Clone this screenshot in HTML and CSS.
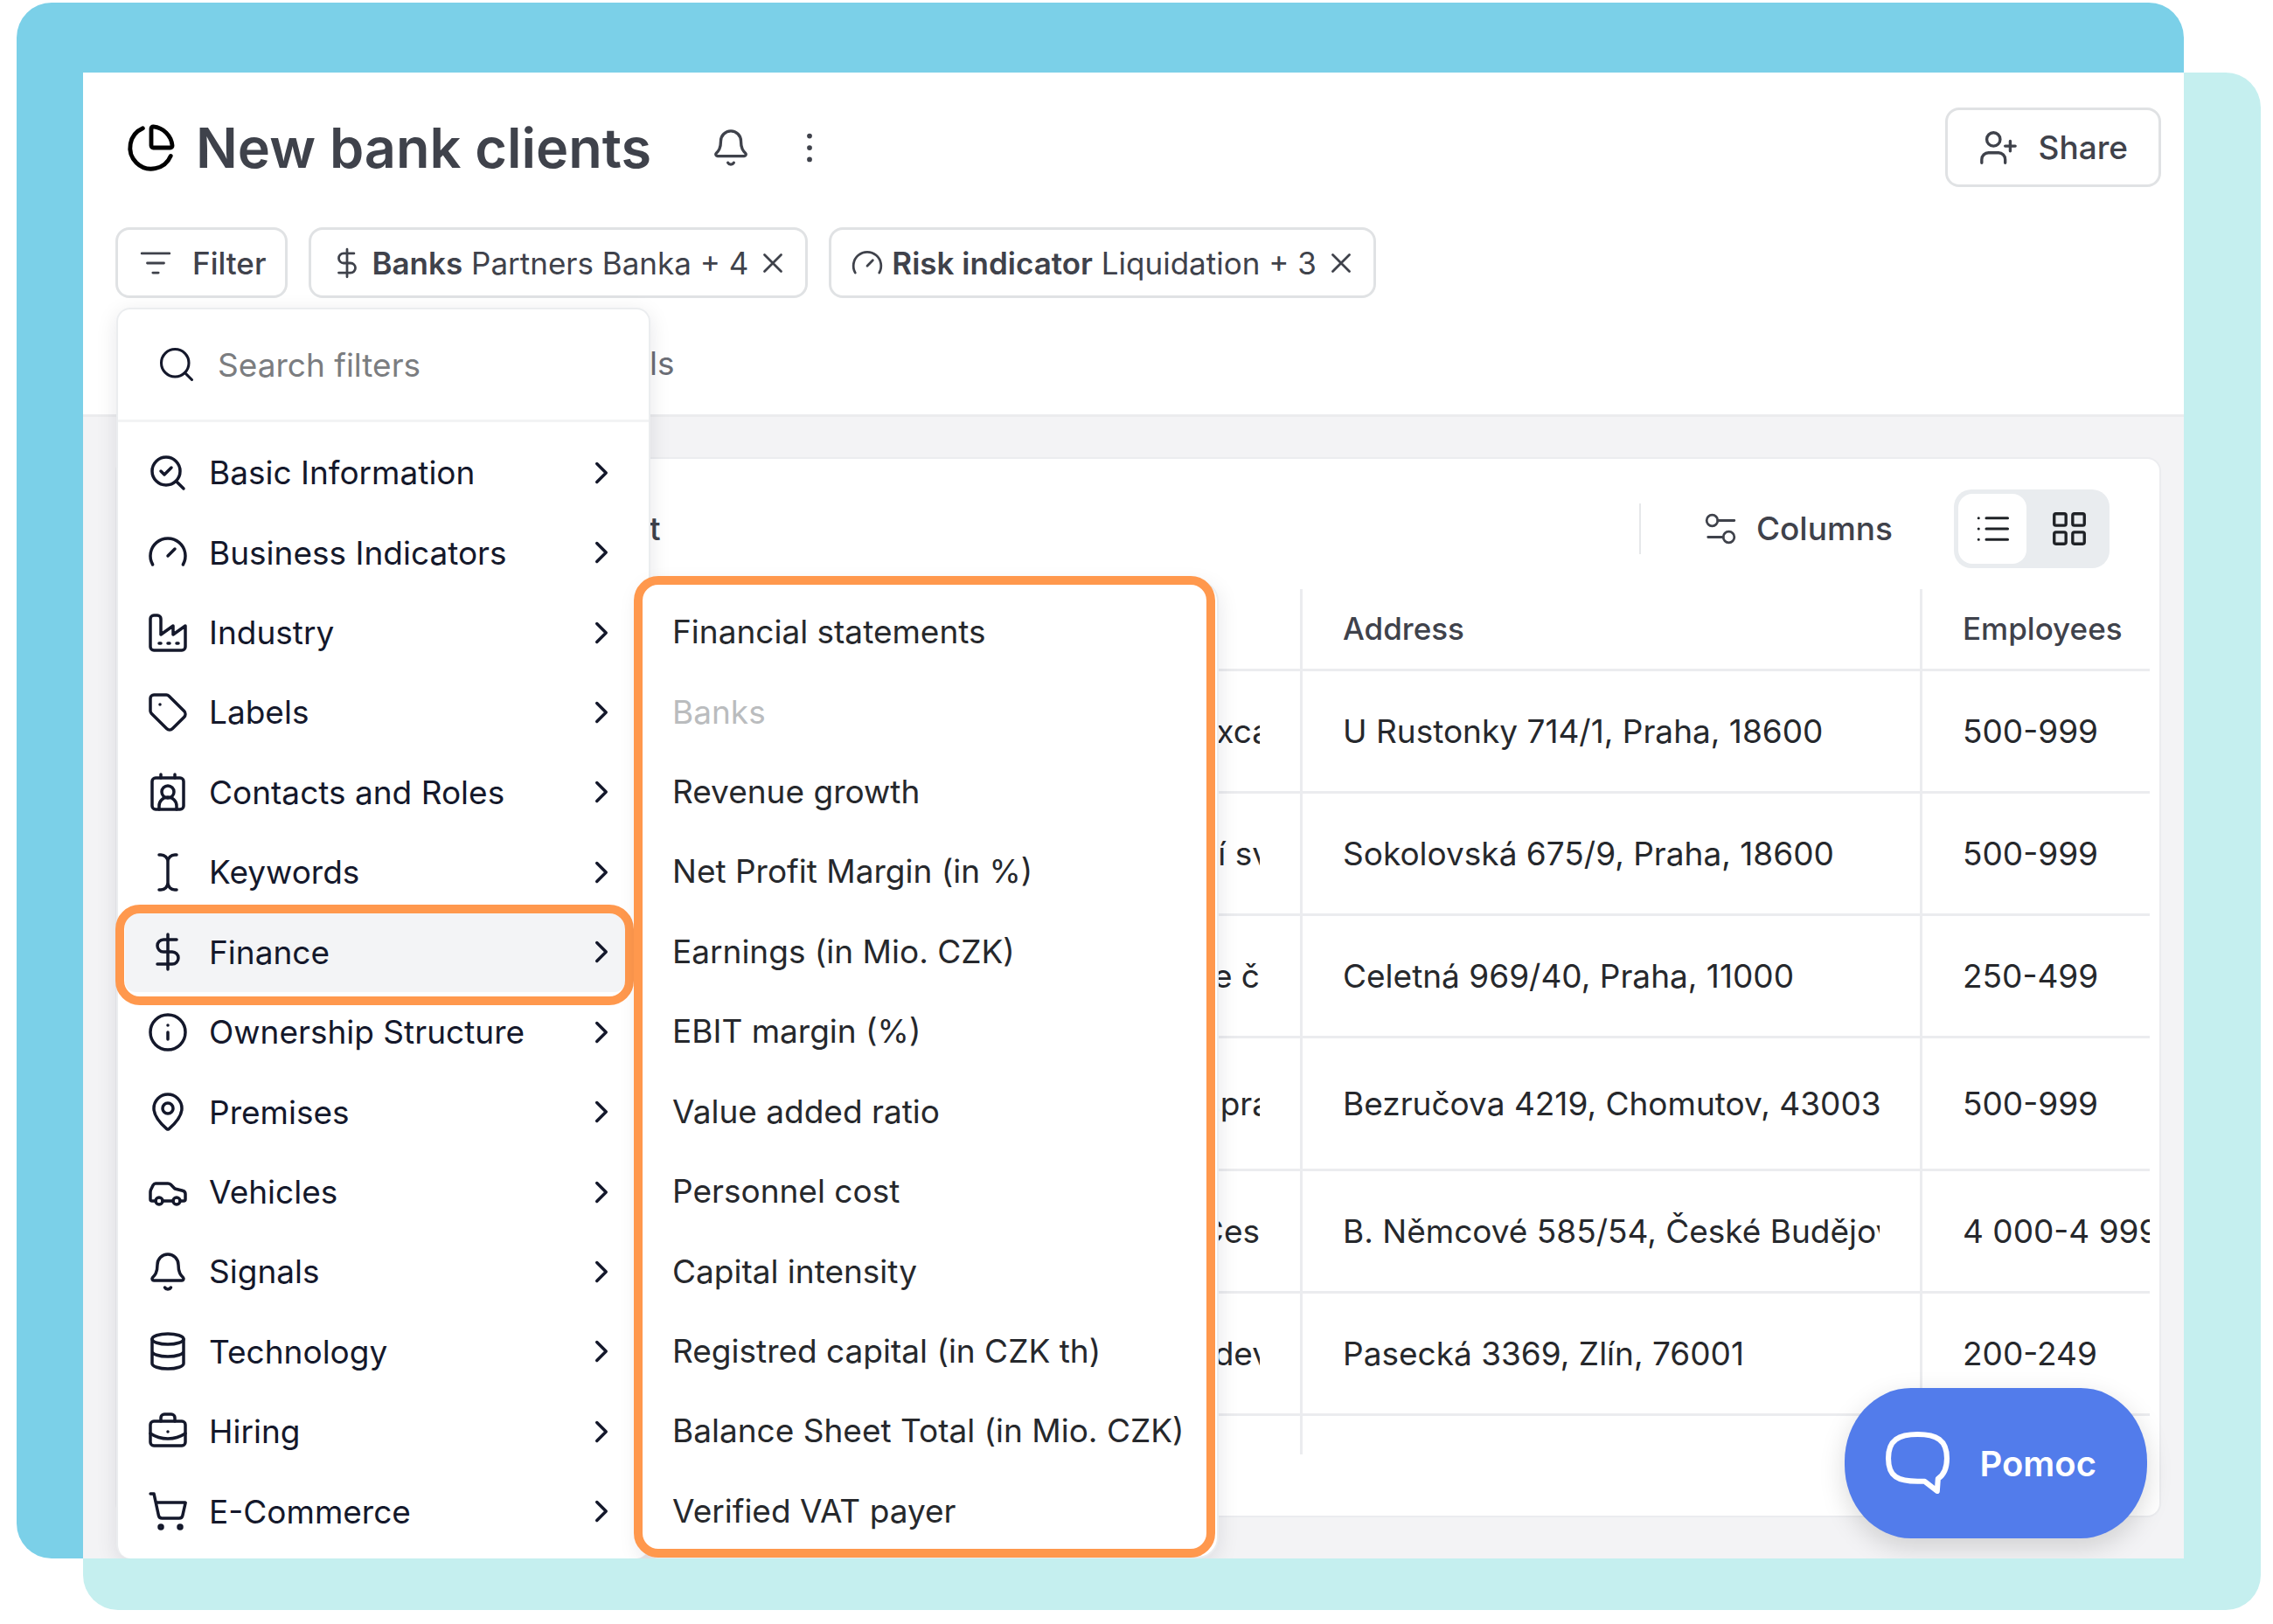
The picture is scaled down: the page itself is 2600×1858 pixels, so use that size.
FILE: index.html
```html
<!DOCTYPE html>
<html lang="en">
<head>
    <meta charset="UTF-8">
    <meta name="viewport" content="width=device-width, initial-scale=1.0">
    <title>New bank clients</title>
    <link rel="stylesheet" href="styles.css">
</head>
<body>

<svg class="sprite" aria-hidden="true">
    <symbol id="chevron" viewBox="0 0 24 24"><path d="m9 18 6-6-6-6"/></symbol>
    <symbol id="close" viewBox="0 0 24 24"><path d="M18 6 6 18M6 6l12 12"/></symbol>
    <symbol id="dollar" viewBox="0 0 24 24"><path d="M12 2v20M17 5H9.500a3.500 3.500 0 0 0 0 7h5a3.500 3.500 0 0 1 0 7H6"/></symbol>
    <symbol id="gauge" viewBox="0 0 24 24"><path d="m12 14 4-4M3.340 19a10 10 0 1 1 17.320 0"/></symbol>
    <symbol id="bell" viewBox="0 0 24 24"><path d="M10.268 21a2 2 0 0 0 3.464 0M3.262 15.326A1 1 0 0 0 4 17h16a1 1 0 0 0 .740-1.673C19.410 13.956 18 12.499 18 8A6 6 0 0 0 6 8c0 4.499-1.411 5.956-2.738 7.326"/></symbol>
</svg>

<div class="stage">
    <div class="window">
        <header class="header">
            <div class="title-row">
                <svg class="icon icon-title" viewBox="0 0 24 24"><path d="M21 12c.552 0 1.005-.449.950-.998a10 10 0 0 0-8.953-8.951c-.550-.055-.998.398-.998.950v8a1 1 0 0 0 1 1zM21.210 15.890A10 10 0 1 1 8 2.830"/></svg>
                <h1>New bank clients</h1>
                <button class="icon-btn" aria-label="Notifications"><svg class="icon icon-lg"><use href="#bell"/></svg></button>
                <button class="icon-btn" aria-label="More"><svg class="icon icon-lg" viewBox="0 0 24 24"><g class="dots"><circle cx="12" cy="5" r="1.500"/><circle cx="12" cy="12" r="1.500"/><circle cx="12" cy="19" r="1.500"/></g></svg></button>
                <button class="btn share">
                    <svg class="icon icon-lg" viewBox="0 0 24 24"><path d="M2 21v-2a4 4 0 0 1 4-4h6a4 4 0 0 1 4 4v2M19 8v6M22 11h-6"/><circle cx="9" cy="7" r="4"/></svg>
                    Share
                </button>
            </div>

            <div class="filter-row">
                <button class="btn filter">
                    <svg class="icon icon-sm" viewBox="0 0 24 24"><path d="M2 5h20M6 12h12M10 19h4"/></svg>
                    Filter
                </button>
                <button class="btn chip">
                    <svg class="icon icon-sm"><use href="#dollar"/></svg>
                    <span><b>Banks</b> Partners Banka + 4</span>
                    <svg class="icon icon-sm"><use href="#close"/></svg>
                </button>
                <button class="btn chip">
                    <svg class="icon icon-sm"><use href="#gauge"/></svg>
                    <span><b>Risk indicator</b> Liquidation + 3</span>
                    <svg class="icon icon-sm"><use href="#close"/></svg>
                </button>
            </div>

            <nav class="tabs"><a href="#">ls</a></nav>
        </header>

        <main class="content">
            <section class="card">
                <div class="toolbar">
                    <span class="toolbar-label">t</span>
                    <div class="toolbar-right">
                        <button class="columns">
                            <svg class="icon icon-sm" viewBox="0 0 24 24"><circle cx="6" cy="6" r="4"/><path d="M10 6h12M3 18h11"/><circle cx="18" cy="18" r="4"/></svg>
                            Columns
                        </button>
                        <div class="toggle">
                            <button class="active" aria-label="List"><svg class="icon icon-md" viewBox="0 0 24 24"><path d="M8 5h14M8 12h14M8 19h14M3 5h.01M3 12h.01M3 19h.01"/></svg></button>
                            <button aria-label="Grid"><svg class="icon icon-lg" viewBox="0 0 24 24"><rect x="3" y="3" width="7" height="7" rx="1"/><rect x="14" y="3" width="7" height="7" rx="1"/><rect x="14" y="14" width="7" height="7" rx="1"/><rect x="3" y="14" width="7" height="7" rx="1"/></svg></button>
                        </div>
                    </div>
                </div>

                <div class="table-wrap">
                    <table>
                        <thead>
                            <tr><th class="col-name"></th><th class="col-address">Address</th><th class="col-employees">Employees</th></tr>
                        </thead>
                        <tbody>
                            <tr><td><div class="name"><span class="cut">xca</span></div></td><td><div class="cell">U Rustonky 714/1, Praha, 18600</div></td><td>500-999</td></tr>
                            <tr><td><div class="name"><span class="cut">í sv</span></div></td><td><div class="cell">Sokolovská 675/9, Praha, 18600</div></td><td>500-999</td></tr>
                            <tr><td><div class="name"><span>e č</span></div></td><td><div class="cell">Celetná 969/40, Praha, 11000</div></td><td>250-499</td></tr>
                            <tr class="tall"><td><div class="name"><span class="cut">spra</span></div></td><td><div class="cell">Bezručova 4219, Chomutov, 43003</div></td><td>500-999</td></tr>
                            <tr><td><div class="name"><span>Čes</span></div></td><td><div class="cell">B. Němcové 585/54, České Budějov</div></td><td>4 000-4 999</td></tr>
                            <tr><td><div class="name"><span class="cut">dev</span></div></td><td><div class="cell">Pasecká 3369, Zlín, 76001</div></td><td>200-249</td></tr>
                            <tr class="last"><td></td><td></td><td></td></tr>
                        </tbody>
                    </table>
                </div>
            </section>
        </main>

        <!-- Filter menu -->
        <div class="menu">
            <label class="search">
                <svg class="icon icon-md" viewBox="0 0 24 24"><circle cx="11" cy="11" r="9"/><path d="m22 22-4.500-4.500"/></svg>
                <input type="text" placeholder="Search filters" aria-label="Search filters">
            </label>
            <div class="menu-list">
                <button class="item"><svg class="icon" viewBox="0 0 24 24"><path d="m8 11 2 2 4-4M21 21l-4.300-4.300"/><circle cx="11" cy="11" r="8"/></svg><span>Basic Information</span><svg class="icon chevron"><use href="#chevron"/></svg></button>
                <button class="item"><svg class="icon"><use href="#gauge"/></svg><span>Business Indicators</span><svg class="icon chevron"><use href="#chevron"/></svg></button>
                <button class="item"><svg class="icon" viewBox="0 0 24 24"><path d="M2 20a2 2 0 0 0 2 2h16a2 2 0 0 0 2-2V8l-7 5V8l-7 5V4a2 2 0 0 0-2-2H4a2 2 0 0 0-2 2ZM17 18h1M12 18h1M7 18h1"/></svg><span>Industry</span><svg class="icon chevron"><use href="#chevron"/></svg></button>
                <button class="item"><svg class="icon" viewBox="0 0 24 24"><path d="M12.586 2.586A2 2 0 0 0 11.172 2H4a2 2 0 0 0-2 2v7.172a2 2 0 0 0 .586 1.414l8.704 8.704a2.426 2.426 0 0 0 3.420 0l6.580-6.580a2.426 2.426 0 0 0 0-3.420zM7.500 7.500h.01"/></svg><span>Labels</span><svg class="icon chevron"><use href="#chevron"/></svg></button>
                <button class="item"><svg class="icon" viewBox="0 0 24 24"><path d="M16 2v2M8 2v2M7 22v-2a5 5 0 0 1 10 0v2"/><circle cx="12" cy="12" r="3.500"/><rect x="3" y="4" width="18" height="18" rx="2"/></svg><span>Contacts and Roles</span><svg class="icon chevron"><use href="#chevron"/></svg></button>
                <button class="item"><svg class="icon" viewBox="0 0 24 24"><path d="M17 22h-1a4 4 0 0 1-4-4V6a4 4 0 0 1 4-4h1M7 22h1a4 4 0 0 0 4-4M7 2h1a4 4 0 0 1 4 4"/></svg><span>Keywords</span><svg class="icon chevron"><use href="#chevron"/></svg></button>
                <button class="item selected"><svg class="icon"><use href="#dollar"/></svg><span>Finance</span><svg class="icon chevron"><use href="#chevron"/></svg></button>
                <button class="item"><svg class="icon" viewBox="0 0 24 24"><circle cx="12" cy="12" r="10"/><path d="M12 16v-4M12 8h.01"/></svg><span>Ownership Structure</span><svg class="icon chevron"><use href="#chevron"/></svg></button>
                <button class="item"><svg class="icon" viewBox="0 0 24 24"><path d="M20 10c0 4.993-5.539 10.193-7.399 11.799a1 1 0 0 1-1.202 0C9.539 20.193 4 14.993 4 10a8 8 0 0 1 16 0"/><circle cx="12" cy="10" r="3"/></svg><span>Premises</span><svg class="icon chevron"><use href="#chevron"/></svg></button>
                <button class="item"><svg class="icon" viewBox="0 0 24 24"><path d="M19 17h2c.600 0 1-.400 1-1v-3c0-.900-.700-1.700-1.500-1.900C18.700 10.600 16 10 16 10s-1.300-1.400-2.200-2.300c-.500-.400-1.100-.700-1.800-.700H5c-.600 0-1.100.400-1.400.900l-1.400 2.900A3.700 3.700 0 0 0 2 12v4c0 .600.400 1 1 1h2M9 17h6"/><circle cx="7" cy="17" r="2"/><circle cx="17" cy="17" r="2"/></svg><span>Vehicles</span><svg class="icon chevron"><use href="#chevron"/></svg></button>
                <button class="item"><svg class="icon"><use href="#bell"/></svg><span>Signals</span><svg class="icon chevron"><use href="#chevron"/></svg></button>
                <button class="item"><svg class="icon" viewBox="0 0 24 24"><ellipse cx="12" cy="5" rx="9" ry="3"/><path d="M3 5v14a9 3 0 0 0 18 0V5M3 12a9 3 0 0 0 18 0"/></svg><span>Technology</span><svg class="icon chevron"><use href="#chevron"/></svg></button>
                <button class="item"><svg class="icon" viewBox="0 0 24 24"><path d="M12 12h.01M16 6V4a2 2 0 0 0-2-2h-4a2 2 0 0 0-2 2v2M22 13a18.150 18.150 0 0 1-20 0"/><rect x="2" y="6" width="20" height="14" rx="2"/></svg><span>Hiring</span><svg class="icon chevron"><use href="#chevron"/></svg></button>
                <button class="item"><svg class="icon" viewBox="0 0 24 24"><circle cx="8" cy="21" r="1"/><circle cx="19" cy="21" r="1"/><path d="M2.050 2.050h2l2.660 12.420a2 2 0 0 0 2 1.580h9.780a2 2 0 0 0 1.950-1.570l1.650-7.430H5.120"/></svg><span>E-Commerce</span><svg class="icon chevron"><use href="#chevron"/></svg></button>
            </div>
        </div>

        <!-- Finance submenu -->
        <div class="submenu">
            <button class="subitem">Financial statements</button>
            <button class="subitem" disabled>Banks</button>
            <button class="subitem">Revenue growth</button>
            <button class="subitem">Net Profit Margin (in %)</button>
            <button class="subitem">Earnings (in Mio. CZK)</button>
            <button class="subitem">EBIT margin (%)</button>
            <button class="subitem">Value added ratio</button>
            <button class="subitem">Personnel cost</button>
            <button class="subitem">Capital intensity</button>
            <button class="subitem">Registred capital (in CZK th)</button>
            <button class="subitem">Balance Sheet Total (in Mio. CZK)</button>
            <button class="subitem">Verified VAT payer</button>
        </div>
        <div class="outline"></div>

        <button class="help">
            <svg class="icon-help" viewBox="0 0 72 72"><path d="M36 3C57 3 69 9 69 30c0 12-4 19-10 23l-1 14-14-11h-8C14 56 3 51 3 30S15 3 36 3Z"/></svg>
            Pomoc
        </button>
    </div>
</div>

</body>
</html>
```
FILE: styles.css
```css
* {
    box-sizing: border-box;
}

body {
    margin: 0;
    background-color: #fff;
    color: #26282c;
    font-family: Inter, sans-serif;
    font-size: 37px;
}

button,
input {
    font: inherit;
    color: inherit;
    background: none;
    border: none;
    padding: 0;
}

button {
    cursor: pointer;
}

.sprite {
    display: none;
}

.icon {
    width: 48px;
    height: 48px;
    flex: none;
    fill: none;
    stroke: currentColor;
    stroke-width: 1.75;
    stroke-linecap: round;
    stroke-linejoin: round;
}

.icon-sm {
    width: 38px;
    height: 38px;
}

.icon-md {
    width: 42px;
    height: 42px;
}

.icon-lg {
    width: 46px;
    height: 46px;
}

/* Coloured backdrop behind the window */
.stage {
    position: relative;
    height: 100vh;
    padding: 83px 102px 75px 95px;
}

.stage::before,
.stage::after {
    content: "";
    position: absolute;
    border-radius: 40px;
}

.stage::before {
    inset: 3px 102px 75px 19px;
    background-color: #7bd0e8;
}

.stage::after {
    inset: 83px 14px 16px 95px;
    background-color: #c5efef;
}

.window {
    position: relative;
    z-index: 1;
    height: 100%;
    display: flex;
    flex-direction: column;
    background-color: #f3f3f5;
    overflow: hidden;
}

/* Header */
.header {
    background-color: #fff;
    border-bottom: 3px solid #ebecee;
    color: #3f424b;
    padding: 40px 26px 0 37px;
}

.title-row {
    display: flex;
    align-items: center;
    height: 91px;
    padding-left: 12px;
}

.title-row h1 {
    margin: 0 68px 0 22px;
    font-size: 63px;
    font-weight: 600;
}

.icon-title {
    width: 58px;
    height: 58px;
    color: #000;
    stroke-width: 2;
}

.icon-btn {
    display: flex;
    margin-right: 44px;
}

.dots {
    fill: currentColor;
    stroke: none;
}

.btn {
    display: flex;
    align-items: center;
    border: 3px solid #e0e2e4;
    border-radius: 16px;
    background-color: #fff;
}

.share {
    height: 91px;
    margin-left: auto;
    padding: 0 35px;
    gap: 22px;
    font-weight: 500;
}

.filter-row {
    display: flex;
    gap: 24px;
    margin-top: 46px;
    font-size: 35px;
}

.filter-row .btn {
    height: 81px;
}

.filter {
    gap: 23px;
    padding: 0 22px 0 24px;
    font-weight: 500;
}

.chip {
    gap: 9px;
    padding: 0 18px 0 22px;
}

.chip b {
    font-weight: 600;
}

.tabs {
    padding: 53px 0 36px 611px;
    line-height: 44px;
}

.tabs a {
    color: #6b6e76;
    text-decoration: none;
}

/* Results card */
.content {
    padding: 46px 26px 47px 37px;
    flex: 1;
}

.card {
    height: 100%;
    background-color: #fff;
    border: 2px solid #ebecef;
    border-radius: 16px;
}

.toolbar {
    display: flex;
    justify-content: space-between;
    align-items: center;
    height: 149px;
    padding: 10px 57px 0 609px;
    color: #3f424b;
    font-weight: 500;
}

.toolbar-right {
    display: flex;
    align-items: center;
    gap: 70px;
}

.columns {
    display: flex;
    align-items: center;
    gap: 22px;
    height: 58px;
    padding-left: 72px;
    border-left: 2px solid #e6e8ea;
}

.toggle {
    display: flex;
    gap: 8px;
    padding: 5px;
    border-radius: 20px;
    background-color: #e9ecef;
    color: #1f2226;
}

.toggle button {
    display: flex;
    align-items: center;
    justify-content: center;
    width: 82px;
    height: 80px;
    border-radius: 16px;
}

.toggle .active {
    width: 78px;
    background-color: #fff;
}

.table-wrap {
    overflow: hidden;
    margin-right: 11px;
}

table {
    width: calc(100% + 60px);
    border-collapse: collapse;
    table-layout: fixed;
}

th {
    height: 92px;
    padding: 0 46px;
    text-align: left;
    color: #3f424b;
    font-size: 35px;
    font-weight: 500;
}

th,
td {
    border-bottom: 3px solid #ebecef;
    border-right: 3px solid #ebecef;
}

.col-address {
    width: 709px;
}

.col-employees {
    width: 320px;
}

td {
    height: 140px;
    padding: 0 46px;
    white-space: nowrap;
}

.tall td {
    height: 152px;
}

.last td {
    height: 46px;
    border-bottom: none;
}

.cell,
.name {
    overflow: hidden;
}

.name {
    display: flex;
    justify-content: flex-end;
}

.cut {
    margin-right: -12px;
}

/* Dropdown menus */
.menu,
.submenu {
    position: absolute;
    background-color: #fff;
    border: 2px solid #ebedef;
    box-shadow: 0 6px 24px rgba(20, 24, 43, 0.1);
}

.menu {
    top: 269px;
    bottom: 0;
    left: 38px;
    width: 611px;
    display: flex;
    flex-direction: column;
    border-radius: 16px;
    border-bottom: none;
    color: #14182b;
}

.search {
    display: flex;
    align-items: center;
    gap: 26px;
    height: 129px;
    padding: 0 46px;
    border-bottom: 3px solid #f2f3f4;
}

.search input {
    flex: 1;
    min-width: 0;
    outline: none;
}

.search input::placeholder {
    color: #7b7d80;
    opacity: 1;
}

.menu-list {
    flex: 1;
    display: grid;
    grid-auto-rows: 1fr;
    padding: 12px 27px 8px 8px;
}

.item {
    position: relative;
    display: flex;
    align-items: center;
    gap: 23px;
    padding: 0 6px 0 25px;
    border-radius: 12px;
    text-align: left;
}

.item span {
    flex: 1;
}

.chevron {
    width: 42px;
    height: 42px;
    stroke-width: 2;
}

.selected {
    background-color: #f3f4f6;
}

.selected::before,
.outline {
    content: "";
    position: absolute;
    border: 10px solid #ff984d;
    border-radius: 28px;
}

.selected::before {
    inset: -9px -10px -15px -11px;
}

.submenu {
    top: 581px;
    bottom: 0;
    left: 636px;
    width: 663px;
    display: grid;
    grid-auto-rows: 1fr;
    padding: 11px 0 7px;
    border-radius: 24px;
}

.subitem {
    padding: 0 36px;
    text-align: left;
    white-space: nowrap;
}

.subitem:disabled {
    color: #babcbe;
}

.outline {
    top: 576px;
    bottom: 1px;
    left: 630px;
    width: 665px;
}

/* Help button */
.help {
    position: absolute;
    right: 42px;
    bottom: 23px;
    display: flex;
    align-items: center;
    gap: 34px;
    height: 172px;
    padding: 0 58px 0 47px;
    border-radius: 76px / 84px;
    background-color: #527ceb;
    box-shadow: 0 10px 30px rgba(0, 0, 0, 0.15);
    color: #fff;
    font-size: 40px;
    font-weight: 600;
}

.icon-help {
    width: 73px;
    height: 73px;
    fill: none;
    stroke: #fff;
    stroke-width: 6;
    stroke-linejoin: round;
}
```
